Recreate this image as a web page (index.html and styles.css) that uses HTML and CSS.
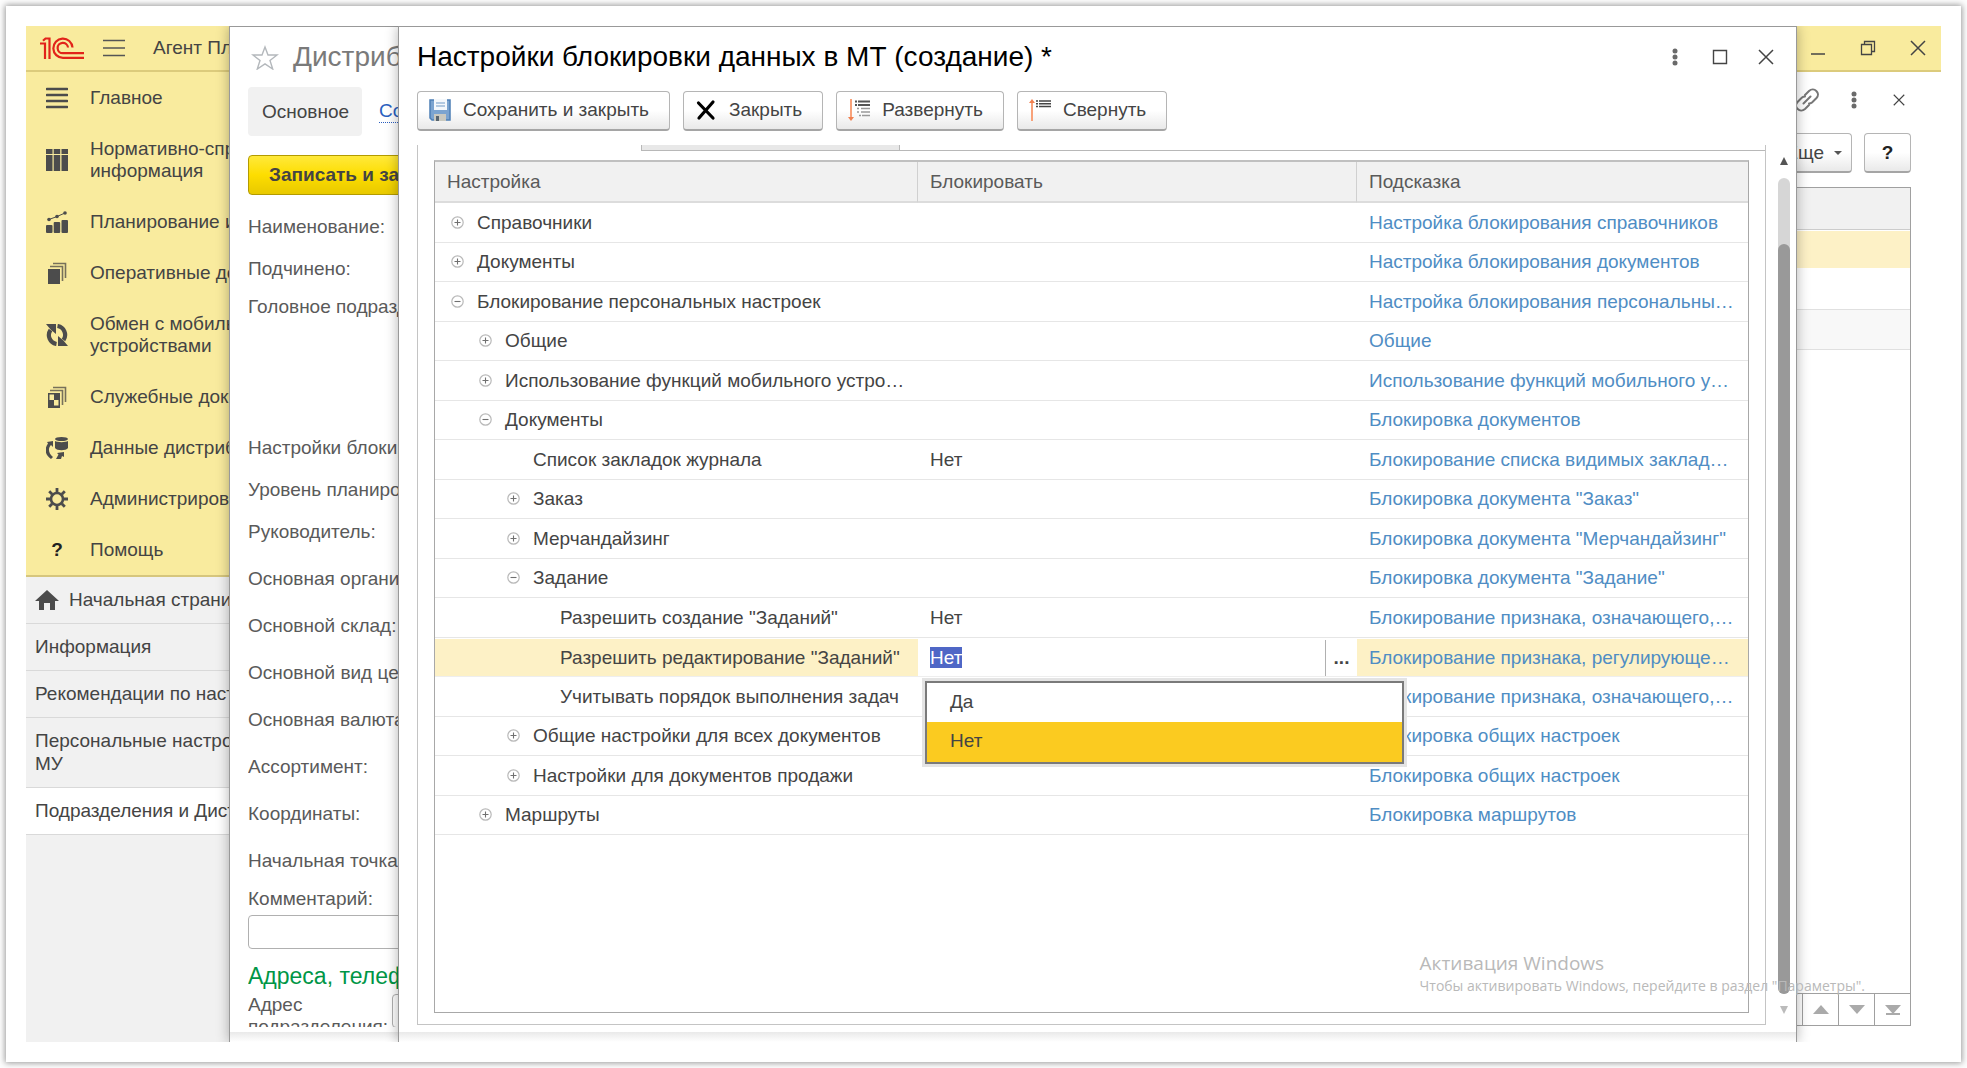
FILE: index.html
```html
<!DOCTYPE html>
<html lang="ru">
<head>
<meta charset="utf-8">
<title>Настройки блокировки данных в МТ</title>
<link rel="stylesheet" href="styles.css">
</head>
<body>
<svg class="defs" aria-hidden="true">
  <symbol id="plus" viewBox="0 0 13 13"><circle cx="6.5" cy="6.5" r="5.7" fill="none" stroke="#b9b9b9" stroke-width="1.2"/><path d="M3.5 6.5h6M6.5 3.5v6" stroke="#707070" stroke-width="1.1"/></symbol>
  <symbol id="minus" viewBox="0 0 13 13"><circle cx="6.5" cy="6.5" r="5.7" fill="none" stroke="#b9b9b9" stroke-width="1.2"/><path d="M3.5 6.5h6" stroke="#707070" stroke-width="1.1"/></symbol>
  <symbol id="dots" viewBox="0 0 6 18"><g fill="#6a6a6a"><circle cx="3" cy="3" r="2.5"/><circle cx="3" cy="9" r="2.5"/><circle cx="3" cy="15" r="2.5"/></g></symbol>
  <symbol id="cross" viewBox="0 0 16 16"><path d="M1 1l14 14M15 1L1 15" stroke="#444" stroke-width="1.5"/></symbol>
</svg>
<div class="card">
<div class="app">

  <header class="topbar">
    <svg class="logo" viewBox="0 0 44 23" width="44" height="23" fill="none" stroke="#e2231a" stroke-width="2.2"><path d="M0 6.500h5V22M3 3.800L5.500 1.500H9.500V22"/><path d="M32.500 10.500A9.600 9.600 0 1 0 23 20.800H44"/><path d="M28 10.500A5.200 5.200 0 1 0 23 16.200H44"/></svg>
    <button class="icon-btn burger" aria-label="Меню"><svg width="22" height="18" viewBox="0 0 22 18"><path d="M0 1.500h22M0 9h22M0 16.500h22" stroke="#555" stroke-width="1.600"/></svg></button>
    <span class="app-name">Агент Плюс</span>
    <div class="topbar-controls">
      <button class="icon-btn" aria-label="Свернуть окно"><svg width="16" height="16" viewBox="0 0 16 16"><path d="M1 14h14" stroke="#444" stroke-width="1.500"/></svg></button>
      <button class="icon-btn" aria-label="Восстановить окно"><svg width="16" height="16" viewBox="0 0 16 16" fill="none" stroke="#444" stroke-width="1.300"><path d="M1.500 4.500h10v10h-10zM4.500 4.500v-3h10v10h-3"/></svg></button>
      <button class="icon-btn" aria-label="Закрыть"><svg width="16" height="16"><use href="#cross"/></svg></button>
    </div>
  </header>

  <div class="workspace">
    <nav class="sidebar">
      <ul class="sections">
        <li><a href="#"><svg viewBox="0 0 22 22"><path d="M1 2h20M1 8h20M1 14h20M1 20h20" stroke="#4c4c4c" stroke-width="2.600" stroke-linecap="round"/></svg><span>Главное</span></a></li>
        <li><a href="#"><svg viewBox="0 0 22 22" fill="#4c4c4c"><path d="M0 0h6.500v5H0zM7.700 0h6.500v5H7.700zM15.500 0H22v5h-6.500zM0 6h6.500v16H0zM7.700 6h6.500v16H7.700zM15.500 6H22v16h-6.500z"/></svg><span>Нормативно-справочная<br>информация</span></a></li>
        <li><a href="#"><svg viewBox="0 0 22 22" fill="#4c4c4c"><rect y="14" width="6.500" height="8" rx="1"/><rect x="7.700" y="11" width="6.500" height="11" rx="1"/><rect x="15.500" y="9" width="6.500" height="13" rx="1"/><circle cx="3" cy="8.500" r="1.800"/><circle cx="11" cy="5.500" r="1.800"/><circle cx="19" cy="2" r="1.800"/><path d="M3 8.500l8-3 8-3.500" fill="none" stroke="#4c4c4c"/></svg><span>Планирование и анализ</span></a></li>
        <li><a href="#"><svg viewBox="0 0 22 22"><path d="M2 7h12v15H2z" fill="#4c4c4c"/><path d="M4 4.500h12.500V19M7 1.500h12.500V16" fill="none" stroke="#77715a" stroke-width="1.600"/></svg><span>Оперативные документы</span></a></li>
        <li><a href="#"><svg viewBox="0 0 22 22"><path d="M10.500 20A9 9 0 0 1 4.500 6M11.500 2a9 9 0 0 1 6 14" fill="none" stroke="#4c4c4c" stroke-width="4.200"/><path d="M0 0h10v10L7 7.500 5 6zM22 22H12V12l3 2.500 2 1.500z" fill="#4c4c4c"/></svg><span>Обмен с мобильными<br>устройствами</span></a></li>
        <li><a href="#"><svg viewBox="0 0 22 22"><path d="M2 7h12v15H2z" fill="#4c4c4c"/><path d="M3.500 8.500H8V14H3.500zM8 14h4.500v5.500H8z" fill="#f9eb9e"/><path d="M4 4.500h12.500V19M7 1.500h12.500V16" fill="none" stroke="#77715a" stroke-width="1.600"/></svg><span>Служебные документы</span></a></li>
        <li><a href="#"><svg viewBox="0 0 22 22" fill="#4c4c4c"><ellipse cx="15.500" cy="2" rx="6.500" ry="2"/><path d="M9 4c2 1.500 11 1.500 13 0v7c-2 3-11 3-13 0z"/><path d="M7 4L1 5l1 1.500C-2 12-1 18 5 22l2-2C2 16 2 11 5 8l2 2zM18 15l-7 1 1.500 1.500L10 22h5l1-3 2 1z"/></svg><span>Данные дистрибьюторов</span></a></li>
        <li><a href="#"><svg viewBox="0 0 22 22" fill="none" stroke="#4c4c4c"><circle cx="11" cy="11" r="6" stroke-width="2.600"/><path d="M11 0v4M11 18v4M0 11h4M18 11h4M3.200 3.200l3 3M15.800 15.800l3 3M18.800 3.200l-3 3M6.200 15.800l-3 3" stroke-width="2.800"/></svg><span>Администрирование</span></a></li>
        <li><a href="#"><b class="help-mark">?</b><span>Помощь</span></a></li>
      </ul>
      <ul class="opened">
        <li><a href="#"><svg viewBox="0 0 24 20" width="24" height="20"><path d="M12 0l12 11h-4v9h-5v-7H9v7H4v-9H0z" fill="#4c4c4c"/></svg>Начальная страница</a></li>
        <li><a href="#">Информация</a></li>
        <li><a href="#">Рекомендации по настройке</a></li>
        <li><a href="#">Персональные настройки<br>МУ</a></li>
        <li class="current"><a href="#">Подразделения и Дистрибьюторы</a></li>
      </ul>
    </nav>

    <main class="list-page">
      <div class="page-tools">
        <button class="icon-btn" aria-label="Ссылка"><svg width="24" height="24" viewBox="0 0 24 24" fill="none" stroke="#777" stroke-width="2" stroke-linecap="round"><path d="M10 7l4-4c5-4.500 12 2 7.500 7L17 14.500c-1 .8-2 1-3 1M14 17l-4 4c-5 4.500-12-2-7.500-7L7 9.500c1-.8 2-1 3-1M8.500 15.500l7-7"/></svg></button>
        <button class="icon-btn" aria-label="Ещё"><svg width="6" height="18"><use href="#dots"/></svg></button>
        <button class="icon-btn page-close" aria-label="Закрыть страницу"><svg width="12" height="12"><use href="#cross"/></svg></button>
      </div>
      <div class="page-commands">
        <button class="btn">Еще <i class="caret"></i></button>
        <button class="btn btn-help">?</button>
      </div>
      <div class="list">
        <div class="list-head"></div>
        <div class="list-row selected"></div>
        <div class="list-row"></div>
        <div class="list-row striped"></div>
        <div class="list-nav">
          <button aria-label="В начало"></button>
          <button aria-label="Вверх"><svg width="16" height="9"><path d="M8 0l8 9H0z" fill="#aaa"/></svg></button>
          <button aria-label="Вниз"><svg width="16" height="9"><path d="M0 0h16L8 9z" fill="#aaa"/></svg></button>
          <button aria-label="В конец"><svg width="16" height="10"><path d="M0 0h16L8 9zM1 8h14v2H1z" fill="#aaa"/></svg></button>
        </div>
      </div>
    </main>
  </div>

  <section class="window window-division">
    <div class="division-title">
      <svg width="28" height="25" viewBox="0 0 28 25"><path d="M14 2l3 8h9l-7 5.500 2.700 8.500L14 18.800 6.300 24 9 15.500 2 10h9z" fill="none" stroke="#b4b8bc" stroke-width="1.400"/></svg>
      <h2>Дистрибьютор</h2>
    </div>
    <div class="division-tabs"><a class="tab-current" href="#">Основное</a><a class="tab-link" href="#">События</a></div>
    <button class="btn-primary">Записать и закрыть</button>
    <form class="fields">
      <div class="field"><label for="f1">Наименование:</label><input id="f1"></div>
      <div class="field"><label for="f2">Подчинено:</label><input id="f2"></div>
      <div class="field tall"><label for="f3">Головное подразделение:</label><input id="f3"></div>
      <div class="field"><label for="f4">Настройки блокировки:</label><input id="f4"></div>
      <div class="field"><label for="f5">Уровень планирования:</label><input id="f5"></div>
      <div class="field"><label for="f6">Руководитель:</label><input id="f6"></div>
      <div class="field-group">
        <div class="field"><label for="f7">Основная организация:</label><input id="f7"></div>
        <div class="field"><label for="f8">Основной склад:</label><input id="f8"></div>
        <div class="field"><label for="f9">Основной вид цен:</label><input id="f9"></div>
        <div class="field"><label for="f10">Основная валюта:</label><input id="f10"></div>
        <div class="field"><label for="f11">Ассортимент:</label><input id="f11"></div>
        <div class="field"><label for="f12">Координаты:</label><input id="f12"></div>
        <div class="field"><label for="f13">Начальная точка:</label><input id="f13"></div>
      </div>
      <div class="field-stacked"><label for="f14">Комментарий:</label><input id="f14"></div>
      <h3>Адреса, телефоны</h3>
      <div class="field-address"><label for="f15">Адрес подразделения:</label><input id="f15"></div>
    </form>
  </section>

  <section class="window window-lock" role="dialog" aria-labelledby="lock-title">
    <div class="lock-title">
      <h1 id="lock-title">Настройки блокировки данных в МТ (создание) *</h1>
      <div class="lock-controls">
        <button class="icon-btn" aria-label="Меню окна"><svg width="6" height="18"><use href="#dots"/></svg></button>
        <button class="icon-btn" aria-label="Развернуть окно"><svg width="16" height="16"><path d="M1.500 1.500h13v13h-13z" fill="none" stroke="#444" stroke-width="1.400"/></svg></button>
        <button class="icon-btn" aria-label="Закрыть окно"><svg width="16" height="16"><use href="#cross"/></svg></button>
      </div>
    </div>
    <div class="lock-commands">
      <button class="btn"><svg width="22" height="22" viewBox="0 0 22 22"><path d="M1 1h20v20H3l-2-2z" fill="#7ba4d0" stroke="#4d7fb5" stroke-width="1.500"/><path d="M5 0h13v11H5z" fill="#f4f8fc"/><path d="M7 4h9M7 7h9" stroke="#9cb9d8" stroke-width="1.300"/><path d="M5 15h12v7H5z" fill="#c9c9c0"/><path d="M7 17h3v5H7z" fill="#57646f"/></svg>Сохранить и закрыть</button>
      <button class="btn"><svg width="22" height="22" viewBox="0 0 22 22"><path d="M3.500 4l14.500 15M18 3L4 19" stroke="#000" stroke-width="3.200" stroke-linecap="round"/></svg>Закрыть</button>
      <button class="btn"><svg width="22" height="22" viewBox="0 0 22 22"><path d="M3 0v19" stroke="#f8a27a" stroke-width="2"/><path d="M0 18h6l-3 4z" fill="#f08050"/><path d="M7 2.500h2M10 2.500h12M7 6h2M10 6h12" stroke="#555" stroke-width="1.800"/><path d="M9 9.500h2M13 9.500h9M9 13h2M13 13h9M11 16.500h2M14 16.500h8" stroke="#999" stroke-width="1.500"/></svg>Развернуть</button>
      <button class="btn"><svg width="22" height="22" viewBox="0 0 22 22"><path d="M3 3v19" stroke="#f8a27a" stroke-width="2"/><path d="M0 4h6L3 0z" fill="#f08050"/><path d="M7 2h2M10 2h12M7 4.800h2M10 4.800h12M7 7.600h2M10 7.600h12" stroke="#444" stroke-width="1.500"/></svg>Свернуть</button>
    </div>
    <div class="lock-body">
      <div class="pane">
        <div class="pane-edge"><span class="edge-open"></span><span class="edge-tab"></span><span class="edge-line"></span></div>
        <div class="grid-box">
          <table class="tree">
            <colgroup><col class="col-name"><col class="col-lock"><col></colgroup>
            <thead><tr><th>Настройка</th><th>Блокировать</th><th>Подсказка</th></tr></thead>
            <tbody>
              <tr><td class="l0"><svg><use href="#plus"/></svg>Справочники</td><td></td><td>Настройка блокирования справочников</td></tr>
              <tr><td class="l0"><svg><use href="#plus"/></svg>Документы</td><td></td><td>Настройка блокирования документов</td></tr>
              <tr><td class="l0"><svg><use href="#minus"/></svg>Блокирование персональных настроек</td><td></td><td>Настройка блокирования персональных настроек</td></tr>
              <tr><td class="l1"><svg><use href="#plus"/></svg>Общие</td><td></td><td>Общие</td></tr>
              <tr><td class="l1"><svg><use href="#plus"/></svg>Использование функций мобильного устройства</td><td></td><td>Использование функций мобильного устройства</td></tr>
              <tr><td class="l1"><svg><use href="#minus"/></svg>Документы</td><td></td><td>Блокировка документов</td></tr>
              <tr><td class="leaf2">Список закладок журнала</td><td>Нет</td><td>Блокирование списка видимых закладок журнала</td></tr>
              <tr><td class="l2"><svg><use href="#plus"/></svg>Заказ</td><td></td><td>Блокировка документа "Заказ"</td></tr>
              <tr><td class="l2"><svg><use href="#plus"/></svg>Мерчандайзинг</td><td></td><td>Блокировка документа "Мерчандайзинг"</td></tr>
              <tr><td class="l2"><svg><use href="#minus"/></svg>Задание</td><td></td><td>Блокировка документа "Задание"</td></tr>
              <tr><td class="leaf3">Разрешить создание "Заданий"</td><td>Нет</td><td>Блокирование признака, означающего, что создание разрешено</td></tr>
              <tr class="active"><td class="leaf3">Разрешить редактирование "Заданий"</td>
                <td class="editing">
                  <div class="editor"><span class="value" role="textbox" tabindex="0" aria-label="Блокировать"><mark>Нет</mark></span><button class="pick" aria-label="Выбрать">...</button></div>
                  <ul class="options" role="listbox"><li role="option">Да</li><li role="option" aria-selected="true">Нет</li></ul>
                </td><td>Блокирование признака, регулирующего редактирование</td></tr>
              <tr><td class="leaf3">Учитывать порядок выполнения задач</td><td></td><td>Блокирование признака, означающего, что порядок учитывается</td></tr>
              <tr><td class="l2"><svg><use href="#plus"/></svg>Общие настройки для всех документов</td><td></td><td>Блокировка общих настроек</td></tr>
              <tr><td class="l2"><svg><use href="#plus"/></svg>Настройки для документов продажи</td><td></td><td>Блокировка общих настроек</td></tr>
              <tr><td class="l1"><svg><use href="#plus"/></svg>Маршруты</td><td></td><td>Блокировка маршрутов</td></tr>
            </tbody>
          </table>
        </div>
      </div>
      <div class="scroll">
        <svg width="8" height="8"><path d="M4 0l4 8H0z" fill="#555"/></svg>
        <div class="track"><div class="thumb"></div></div>
        <svg width="8" height="8"><path d="M0 0h8L4 8z" fill="#bbb"/></svg>
      </div>
    </div>
  </section>

  <div class="watermark"><p class="wm-title">Активация Windows</p><p>Чтобы активировать Windows, перейдите в раздел "Параметры".</p></div>
</div>
</div>
</body>
</html>
```
FILE: styles.css
```css
* { box-sizing: border-box; }
body { margin: 0; padding: 6px; background: #fdfdfd; font: 19px/22px "Liberation Sans", Arial, sans-serif; color: #444; }
ul, p, h1, h2, h3 { margin: 0; padding: 0; list-style: none; font-weight: 400; }
a { color: inherit; text-decoration: none; }
button, input { font: inherit; color: inherit; }
svg { display: block; flex: none; }
.defs { position: absolute; width: 0; height: 0; }

.card { display: flex; min-height: calc(100vh - 12px); padding: 20px; background: #fff; box-shadow: 0 0 6px 1px #999; }
.app { position: relative; flex: 1; display: flex; flex-direction: column; overflow: hidden; background: #fff; }

.icon-btn { display: flex; align-items: center; justify-content: center; padding: 0; border: 0; background: none; }

.topbar { display: flex; align-items: center; height: 46px; padding: 0 15px 0 14px; background: #f9eb9e; border-bottom: 2px solid #dccb7c; }
.burger { margin: 0 28px 0 19px; }
.topbar-controls { display: flex; gap: 34px; margin-left: auto; }

.workspace { flex: 1; display: flex; }
.sidebar { flex: 0 0 310px; background: #f1f1f1; white-space: nowrap; }
.sections { background: #f9eb9e; border-bottom: 2px solid #d6c67d; }
.sections a { display: flex; align-items: center; gap: 22px; padding: 15px 20px 14px; }
.sections svg { width: 22px; height: 22px; }
.help-mark { width: 22px; text-align: center; color: #222; }
.opened li { border-bottom: 1px solid #d9d9d9; }
.opened a { display: flex; align-items: center; gap: 10px; padding: 11px 9px 12px; line-height: 23px; }
.opened .current { background: #fff; }

.list-page { flex: 1; display: flex; flex-direction: column; padding: 15px 30px 16px 0; }
.page-tools { display: flex; justify-content: flex-end; align-items: center; gap: 32px; height: 25px; padding-right: 6px; }
.page-close { margin-left: 4px; }
.page-commands { display: flex; justify-content: flex-end; gap: 12px; margin-top: 21px; }
.btn { display: flex; align-items: center; gap: 12px; height: 40px; padding: 0 20px 2px 11px; border: 1px solid #b5b5b5; border-bottom: 2px solid #a5a5a5; border-radius: 4px; background: linear-gradient(#fff 50%, #e9e9e9); white-space: nowrap; }
.page-commands .btn { gap: 10px; padding: 0 9px 0 12px; }
.page-commands .btn-help { width: 47px; padding: 0; justify-content: center; font-weight: 700; color: #222; }
.caret { border: 4px solid transparent; border-top-color: #555; border-bottom: 0; }
.list { flex: 1; display: flex; flex-direction: column; margin-top: 14px; border: 1px solid #a0a0a0; }
.list-head { height: 42px; background: #f1f1f1; border-bottom: 1px solid #ccc; }
.list-row { height: 40px; border-bottom: 1px solid #e0e0e0; }
.list-row.selected { background: #fdf1c6; border: solid #fff; border-width: 1px 0 2px; }
.list-row.striped { background: #f8f8f8; }
.list-nav { display: flex; justify-content: flex-end; height: 32px; margin-top: auto; border-top: 1px solid #a0a0a0; }
.list-nav button { display: flex; align-items: center; justify-content: center; width: 36px; padding: 0; border: 0; border-left: 1px solid #a0a0a0; background: #fff; }

.window { position: absolute; top: 0; bottom: 0; background: #fff; border: solid #999; border-width: 1px 1px 0; box-shadow: 0 0 12px rgba(0, 0, 0, .3); }
.window::after { content: ""; position: absolute; left: 0; right: 0; bottom: 0; height: 10px; background: linear-gradient(#e9e9e9, #fff); }

.window-division { left: 203px; right: 200px; padding: 0 18px 15px; display: flex; flex-direction: column; align-items: flex-start; overflow: hidden; white-space: nowrap; }
.division-title { display: flex; align-items: center; gap: 14px; height: 60px; padding-left: 3px; color: #7a7a7a; }
.division-title h2 { font-size: 28px; line-height: 32px; }
.division-tabs { display: flex; align-items: center; gap: 17px; height: 49px; }
.tab-current { height: 49px; padding: 14px 13px 0 14px; border-radius: 4px; background: #f1f1f1; }
.tab-link { color: #2a5fc0; border-bottom: 1px dotted #2a5fc0; }
.btn-primary { height: 40px; margin: 19px 0 11px; padding: 0 20px; border: 1px solid #b39b00; border-radius: 4px; background: linear-gradient(#ffe93b, #fddd00 50%, #e8c900); font-weight: 700; }
.fields { flex: 1; min-height: 0; align-self: stretch; overflow: hidden; color: #5a5a5a; }
.fields input { border: 1px solid #b0b0b0; border-radius: 4px; height: 34px; }
.field { display: flex; align-items: center; height: 42px; }
.field label { flex: 0 0 260px; }
.field input { flex: 1; }
.field.tall { height: 137px; align-items: flex-start; padding-top: 6px; }
.field-group { margin-top: 2px; }
.field-group .field { height: 47px; }
.field-stacked label { display: block; height: 31px; padding-top: 4px; }
.field-stacked input { display: block; width: 100%; }
.fields h3 { padding: 15px 0 6px; font-size: 23px; line-height: 24px; color: #009646; }
.field-address { display: flex; }
.field-address label { width: 144px; white-space: normal; padding-top: 0; }
.field-address input { flex: 1; }

.window-lock { left: 372px; right: 144px; padding: 0 0 17px 18px; display: flex; flex-direction: column; }
.lock-title { display: flex; justify-content: space-between; align-items: center; height: 60px; padding-right: 22px; }
.lock-title h1 { font-size: 28px; line-height: 32px; color: #000; }
.lock-controls { display: flex; align-items: center; gap: 30px; }
.lock-controls .icon-btn:first-child { margin-right: 4px; }
.lock-commands { display: flex; gap: 13px; height: 58px; padding-top: 4px; }
.lock-body { flex: 1; display: flex; min-height: 0; }
.pane { flex: 1; display: flex; flex-direction: column; padding: 0 16px 11px; border: solid #c4c4c4; border-width: 0 1px 1px; min-width: 0; }
.pane-edge { display: flex; height: 6px; margin: 0 -16px 9px; }
.edge-open { width: 223px; }
.edge-tab { width: 259px; background: #e8e8e8; border: solid #b8b8b8; border-width: 0 1px 1px; }
.edge-line { flex: 1; background: #fff; border-bottom: 1px solid #b8b8b8; }

.grid-box { flex: 1; border: 1px solid #a8a8a8; border-top: 2px solid #c0c0c0; }
.tree { width: 100%; table-layout: fixed; border-collapse: separate; border-spacing: 0; }
.col-name { width: 483px; }
.col-lock { width: 439px; }
.tree th { height: 41px; padding: 0 12px; text-align: left; font-weight: 400; color: #5a5a5a; background: #f1f1f1; border-bottom: 2px solid #dcdcdc; border-right: 1px solid #d0d0d0; }
.tree th:last-child { border-right: 0; }
.tree td { height: 39px; padding: 0 12px; border-bottom: 1px solid #e6e6e6; white-space: nowrap; overflow: hidden; text-overflow: ellipsis; }
.tree tr:nth-child(odd) td { height: 40px; }
.tree td:last-child { color: #4f8dc4; }
.tree td svg { display: inline-block; width: 13px; height: 13px; margin-right: 13px; vertical-align: 0; }
.tree .l0 { padding-left: 16px; }
.tree .l1 { padding-left: 44px; }
.tree .l2 { padding-left: 72px; }
.tree .leaf2 { padding-left: 98px; }
.tree .leaf3 { padding-left: 125px; }
.tree .active td { background: #fdf1c6; border-top: 1px solid #fff; border-bottom: 1px solid #eee; }
.tree .active .editing { position: relative; overflow: visible; padding: 0 0 0 12px; background: #fff; }
.editor { display: flex; align-items: center; justify-content: space-between; height: 36px; }
.editor mark { background: #4f67c6; color: #fff; }
.pick { width: 32px; height: 36px; padding: 0; border: 0; border-left: 1px solid #b0b0b0; background: #fff; font-weight: 700; }
.options { position: absolute; z-index: 1; top: 42px; left: 7px; width: 479px; border: 2px solid #7a7a7a; background: #fff; box-shadow: 0 0 0 3px #e4e4e4; }
.options li { height: 39px; padding: 8px 23px; }
.options li[aria-selected] { height: 40px; background: #fbcb20; }

.scroll { display: flex; flex-direction: column; align-items: center; width: 30px; padding: 12px 6px 11px 12px; }
.track { flex: 1; display: flex; width: 12px; margin: 13px 0 12px; padding-top: 66px; border-radius: 6px; background: #d6d6d6; }
.thumb { flex: 1; border-radius: 6px; background: #999; }

.watermark { position: absolute; right: 76px; bottom: 46px; color: #b9b9b9; font: 14px/20px "Open Sans", "Noto Sans", sans-serif; white-space: nowrap; }
.wm-title { font-size: 19px; line-height: 26px; }
```
